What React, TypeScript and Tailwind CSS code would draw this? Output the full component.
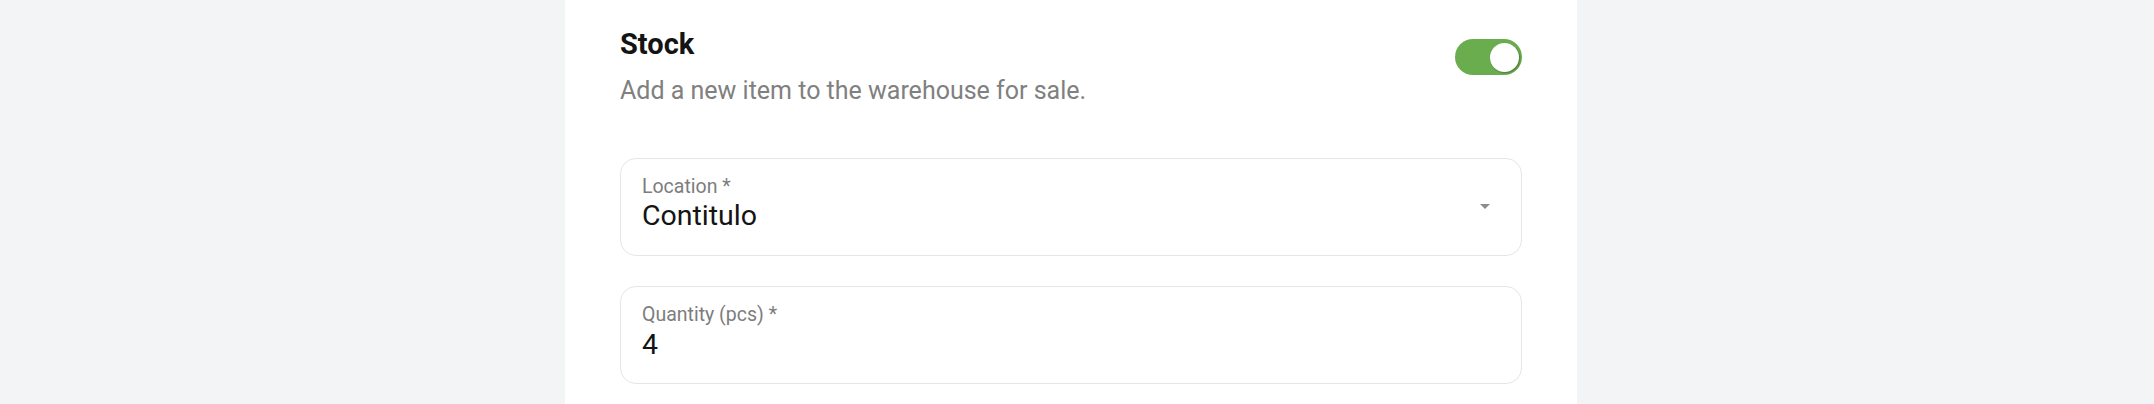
import React from 'react';

function Field({ label, value, select }: { label: string; value: string; select?: boolean }) {
  return (
    <div className="relative flex h-[98px] items-center rounded-[16px] border border-[#e6e6e8] bg-white pl-[21px] pr-[31px]">
      <div className="flex-1 self-start pt-[15.5px]">
        <div className="text-[19.5px] leading-[24px] text-[#7d7d7d]">{label}</div>
        <div className={`text-[28.5px] leading-[33px] text-[#141414] ${select ? '' : 'mt-[1.5px]'}`}>{value}</div>
      </div>
      {select && (
        <svg width="10" height="5" viewBox="0 0 10 5" className="mb-[1px]">
          <path d="M0 0h10L5 5z" fill="#8c8c8c" />
        </svg>
      )}
    </div>
  );
}

export default function App() {
  return (
    <div className="h-screen overflow-hidden bg-[#f3f4f6] font-['Roboto',sans-serif]">
      <div className="ml-[565px] h-full w-[1012px] bg-white px-[55px] pt-[28px]">
        <div className="flex items-start justify-between">
          <div>
            <h2 className="text-[29px] font-bold leading-[33px] text-[#141414]">Stock</h2>
            <p className="mt-[13px] text-[25px] leading-[33px] text-[#808080]">
              Add a new item to the warehouse for sale.
            </p>
          </div>
          <button className="relative mt-[11px] h-[36px] w-[67px] rounded-full bg-[#6aad4f]">
            <span className="absolute right-[3px] top-[3.5px] h-[29px] w-[29px] rounded-full bg-white shadow-[1px_1px_2px_rgba(0,0,0,0.3)]" />
          </button>
        </div>

        <div className="mt-[51px] flex flex-col gap-[30px]">
          <Field label="Location *" value="Contitulo" select />
          <Field label="Quantity (pcs) *" value="4" />
        </div>
      </div>
    </div>
  );
}
